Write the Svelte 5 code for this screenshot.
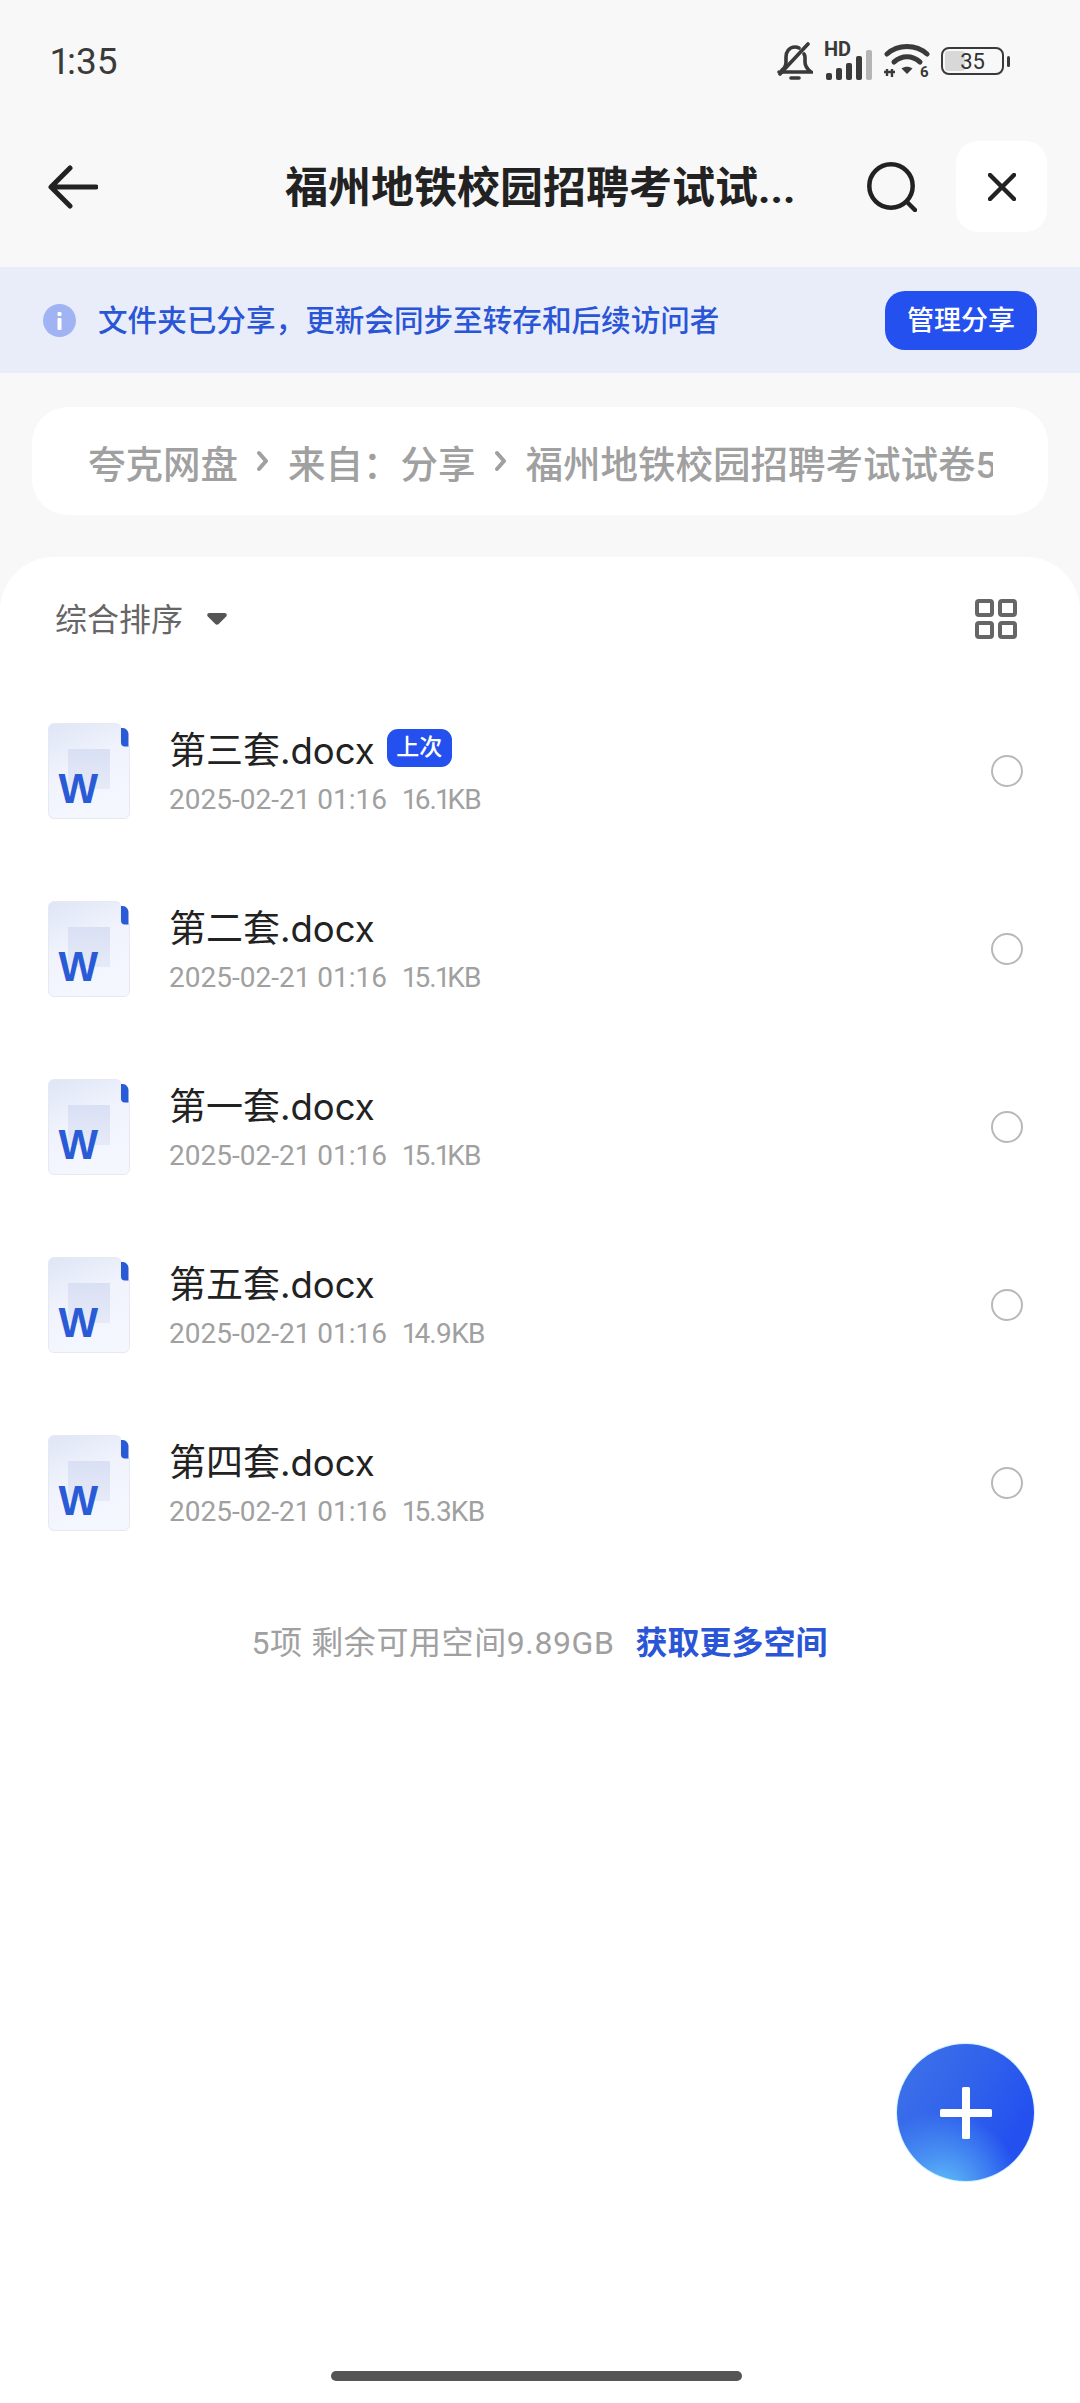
<script>
  const files = [
    { name: "第三套", size: "16.1KB", last: true },
    { name: "第二套", size: "15.1KB" },
    { name: "第一套", size: "15.1KB" },
    { name: "第五套", size: "14.9KB" },
    { name: "第四套", size: "15.3KB" },
  ];
</script>

<div class="page">
  <!-- status bar -->
  <div class="status">
    <span class="time">1:35</span>
    <div class="status-icons">
      <svg width="36" height="38" viewBox="0 0 36 38" fill="none" stroke="#3a3a3a" stroke-width="3.6" stroke-linecap="round">
        <path d="M2 30h32c-4-3-6-6-6-10v-5c0-1-.4-2-1-3M22 6c-1-.6-2.500-1-4-1-6 0-9 5-9 10v5c0 3-1 6-4 8" />
        <path d="M3 32 31 2" />
        <path d="M14 36h8" />
      </svg>
      <div class="signal">
        <span class="hd">HD</span>
        <div class="bars">
          <i class="b1"></i><i class="b2"></i><i class="b3"></i><i class="b4"></i><i class="b5"></i>
        </div>
      </div>
      <svg width="46" height="40" viewBox="0 0 46 40" fill="none">
        <path d="M3 13C14 3 32 3 43 13" stroke="#3a3a3a" stroke-width="5" stroke-linecap="round" />
        <path d="M10 21c8-7 18-7 26 0" stroke="#3a3a3a" stroke-width="5" stroke-linecap="round" />
        <path d="M17.500 27.500c3.500-2.500 7.500-2.500 11 0L23 33z" fill="#3a3a3a" />
        <path d="M3 35v-7M8 28v8M11 31H0" stroke="#3a3a3a" stroke-width="2.400" />
        <text x="36" y="36" class="six">6</text>
      </svg>
      <div class="battery">
        <div class="battery-body">
          <div class="battery-fill"></div>
          <span>35</span>
        </div>
        <i class="battery-nub"></i>
      </div>
    </div>
  </div>

  <!-- nav bar -->
  <div class="nav">
    <svg class="back" width="50" height="44" viewBox="0 0 50 44" fill="none" stroke="#222" stroke-width="5" stroke-linecap="round" stroke-linejoin="round">
      <path d="M22 3 3 22l19 19M4 22h44" />
    </svg>
    <div class="title">福州地铁校园招聘考试试...</div>
    <svg class="search" width="50" height="50" viewBox="0 0 50 50" fill="none" stroke="#222" stroke-width="4.500" stroke-linecap="round">
      <circle cx="24" cy="24" r="21.700" />
      <path d="M41 41l7 7" />
    </svg>
    <button class="close" aria-label="关闭">
      <svg width="28" height="28" viewBox="0 0 28 28" fill="none" stroke="#222" stroke-width="4.500" stroke-linecap="round">
        <path d="M2 2l24 24M26 2 2 26" />
      </svg>
    </button>
  </div>

  <!-- shared folder notice -->
  <div class="notice">
    <svg class="info" width="33" height="33" viewBox="0 0 33 33">
      <circle cx="16.500" cy="16.500" r="16.500" fill="#a0b4f3" />
      <rect x="14.500" y="14" width="4" height="12" rx="1" fill="#fff" />
      <rect x="14.500" y="8" width="4" height="4" rx="1" fill="#fff" />
    </svg>
    <span class="notice-text">文件夹已分享，更新会同步至转存和后续访问者</span>
    <button class="manage"><span>管理分享</span></button>
  </div>

  <!-- breadcrumb -->
  <div class="crumb">
    <div class="crumb-inner">
      <span>夸克网盘</span>
      <svg width="12" height="22" viewBox="0 0 12 22" fill="none" stroke="#a0a0a0" stroke-width="4" stroke-linecap="round" stroke-linejoin="round"><path d="M2 3l7 8-7 8" /></svg>
      <span>来自：分享</span>
      <svg width="12" height="22" viewBox="0 0 12 22" fill="none" stroke="#a0a0a0" stroke-width="4" stroke-linecap="round" stroke-linejoin="round"><path d="M2 3l7 8-7 8" /></svg>
      <span>福州地铁校园招聘考试试卷5套</span>
    </div>
  </div>

  <!-- file sheet -->
  <div class="sheet">
    <div class="sort">
      <span class="sort-label">综合排序</span>
      <svg class="caret" width="20" height="12" viewBox="0 0 20 12" fill="#555">
        <path d="M2.500 0h15c2 0 3 2 1.700 3.500l-7.500 7.500c-1 1-2.400 1-3.400 0L.8 3.500C-.5 2 .5 0 2.500 0z" />
      </svg>
      <svg class="grid" width="42" height="40" viewBox="0 0 42 40" fill="none" stroke="#666" stroke-width="4">
        <rect x="2" y="2" width="15" height="14" rx="2" />
        <rect x="25" y="2" width="15" height="14" rx="2" />
        <rect x="2" y="24" width="15" height="14" rx="2" />
        <rect x="25" y="24" width="15" height="14" rx="2" />
      </svg>
    </div>

    <div class="list">
      {#each files as file}
        <div class="row">
          <svg class="doc" width="82" height="96" viewBox="0 0 82 96">
            <defs>
              <linearGradient id="docbg" x1="0" y1="0" x2="0.400" y2="1">
                <stop offset="0" stop-color="#dfe5f6" />
                <stop offset="0.500" stop-color="#f0f3fc" />
                <stop offset="1" stop-color="#f4f7fe" />
              </linearGradient>
              <linearGradient id="docrect" x1="0" y1="0" x2="0" y2="1">
                <stop offset="0" stop-color="#d9e0f4" />
                <stop offset="1" stop-color="#e6eaf8" />
              </linearGradient>
            </defs>
            <path d="M6 .5h62a5 5 0 0 1 5 5V20a3 3 0 0 0 3 3h5.500v67a5.500 5.500 0 0 1-5.500 5.500H6A5.500 5.500 0 0 1 .5 90V6A5.500 5.500 0 0 1 6 .5z" fill="url(#docbg)" stroke="#e6e9f2" />
            <path d="M73 5h2a6 6 0 0 1 5.500 6v12.500h-3.500a4 4 0 0 1-4-4z" fill="#2a5bd7" />
            <rect x="20" y="26" width="42" height="40" fill="url(#docrect)" />
            <text x="10.500" y="80" class="w">W</text>
          </svg>
          <div class="info-col">
            <div class="name-line">
              <span class="name">{file.name}<span class="ext">.docx</span></span>
              {#if file.last}<span class="badge">上次</span>{/if}
            </div>
            <div class="meta">
              <span>2025-02-21 01:16</span>
              <span class="size">{file.size}</span>
            </div>
          </div>
          <i class="radio"></i>
        </div>
      {/each}
    </div>

    <div class="summary">
      <span class="left">5项 剩余可用空间9.89GB</span>
      <span class="more">获取更多空间</span>
    </div>
  </div>

  <button class="fab" aria-label="新建">
    <svg width="52" height="52" viewBox="0 0 52 52" fill="#fff">
      <rect x="22" y="0" width="8" height="52" rx="1.500" />
      <rect x="0" y="22" width="52" height="8" rx="1.500" />
    </svg>
  </button>
  <div class="home"></div>
</div>

<style>
  :global(body) {
    margin: 0;
    background: #f8f8f8;
  }

  .page {
    position: relative;
    width: 1080px;
    height: 2403px;
    overflow: hidden;
    display: flex;
    flex-direction: column;
    background: #f8f8f8;
    font-family: Roboto, "Noto Sans CJK SC", sans-serif;
    color: #222;
  }

  button {
    border: none;
    padding: 0;
    font-family: inherit;
  }

  /* status bar */
  .status {
    height: 122px;
    flex: none;
    display: flex;
    align-items: center;
    padding: 0 70px 0 51px;
    box-sizing: border-box;
  }
  .time {
    font-size: 37px;
    color: #3a3a3a;
    font-family: Roboto, sans-serif;
    font-variant-numeric: proportional-nums;
  }
  .status-icons {
    margin-left: auto;
    display: flex;
    align-items: center;
    gap: 11px;
  }
  .signal {
    position: relative;
    width: 49px;
    height: 38px;
  }
  .hd {
    position: absolute;
    left: 0;
    top: -3px;
    font-size: 20px;
    font-weight: 700;
    color: #3a3a3a;
    line-height: 20px;
  }
  .bars {
    position: absolute;
    left: 2px;
    right: 0;
    bottom: 0;
    height: 30px;
    display: flex;
    align-items: flex-end;
    gap: 4px;
  }
  .bars i {
    width: 6px;
    border-radius: 2px;
    background: #3a3a3a;
  }
  .b1 { height: 7px; }
  .b2 { height: 12px; }
  .b3 { height: 17px; }
  .b4 { height: 24px; }
  .b5 { height: 30px; background: #b5b5b5 !important; }
  .six {
    font-size: 15px;
    font-weight: 700;
    fill: #3a3a3a;
    font-family: Roboto, sans-serif;
  }
  .battery {
    display: flex;
    align-items: center;
    gap: 3px;
  }
  .battery-body {
    position: relative;
    width: 63px;
    height: 28px;
    box-sizing: border-box;
    border: 2.500px solid #3a3a3a;
    border-radius: 8px;
    display: flex;
    align-items: center;
    justify-content: center;
    font-size: 22px;
    color: #333;
  }
  .battery-fill {
    position: absolute;
    left: 2px;
    top: 2px;
    bottom: 2px;
    width: 20px;
    border-radius: 3px;
    background: #d8d8d8;
  }
  .battery-body span {
    position: relative;
    font-family: Roboto, sans-serif;
  }
  .battery-nub {
    width: 3px;
    height: 11px;
    border-radius: 2px;
    background: #3a3a3a;
  }

  /* nav */
  .nav {
    position: relative;
    height: 145px;
    flex: none;
    display: flex;
    align-items: center;
    padding: 0 33px 16px 48px;
    box-sizing: border-box;
  }
  .title {
    position: absolute;
    left: 285px;
    top: 36px;
    font-size: 43px;
    line-height: 60px;
    font-weight: 700;
    color: #222;
    white-space: nowrap;
  }
  .search {
    margin-left: auto;
    margin-right: 39px;
  }
  .close {
    width: 91px;
    height: 91px;
    border-radius: 22px;
    background: #fff;
    display: flex;
    align-items: center;
    justify-content: center;
  }

  /* notice */
  .notice {
    height: 106px;
    flex: none;
    display: flex;
    align-items: center;
    padding: 0 43px;
    box-sizing: border-box;
    background: #e9edf9;
  }
  .info {
    flex: none;
  }
  .notice-text {
    margin: 0 0 3px 22px;
    font-size: 29.600px;
    font-weight: 500;
    color: #2a55d6;
    white-space: nowrap;
  }
  .manage {
    margin-left: auto;
    width: 152px;
    height: 59px;
    padding-bottom: 4px;
    border-radius: 20px;
    background: #2350ef;
    color: #fff;
    font-size: 27px;
    font-weight: 500;
  }

  /* breadcrumb */
  .crumb {
    height: 108px;
    flex: none;
    margin: 34px 32px 0;
    padding: 0 55px 0 56px;
    border-radius: 36px;
    background: #fff;
    display: flex;
    align-items: center;
    box-sizing: border-box;
  }
  .crumb-inner {
    width: 100%;
    display: flex;
    align-items: center;
    gap: 19px;
    overflow: hidden;
    white-space: nowrap;
    font-size: 37.500px;
    font-weight: 500;
    color: #a0a0a0;
  }
  .crumb-inner svg {
    flex: none;
  }

  /* sheet */
  .sheet {
    flex: 1;
    margin-top: 42px;
    border-radius: 54px 54px 0 0;
    background: #fff;
  }
  .sort {
    height: 120px;
    display: flex;
    align-items: center;
    padding: 0 63px 0 55px;
    box-sizing: border-box;
  }
  .sort-label {
    font-size: 32px;
    color: #666;
  }
  .caret {
    margin: 4px 0 0 24px;
  }
  .grid {
    margin: 4px 0 0 auto;
  }
  .list {
    margin-top: 5px;
  }
  .row {
    height: 178px;
    display: flex;
    align-items: center;
    padding: 0 57px 0 48px;
    box-sizing: border-box;
  }
  .doc {
    flex: none;
  }
  .w {
    font-family: "Liberation Sans", sans-serif;
    font-size: 42px;
    font-weight: 700;
    fill: #2a5bd7;
  }
  .info-col {
    margin-left: 39px;
    display: flex;
    flex-direction: column;
    gap: 8px;
  }
  .name-line {
    display: flex;
    align-items: center;
    gap: 12px;
    height: 50px;
  }
  .name {
    font-size: 37px;
    color: #222;
  }
  .ext {
    font-family: Inter, sans-serif;
    font-size: 36.500px;
  }
  .badge {
    width: 65px;
    height: 38px;
    border-radius: 11px;
    background: #2350ef;
    color: #fff;
    font-size: 23px;
    font-weight: 500;
    text-align: center;
    line-height: 37px;
  }
  .meta {
    display: flex;
    gap: 16px;
    font-size: 28px;
    line-height: 38px;
    color: #a0a0a0;
  }
  .size {
    letter-spacing: -0.800px;
    font-variant-numeric: proportional-nums;
  }
  .radio {
    margin-left: auto;
    width: 32px;
    height: 32px;
    box-sizing: border-box;
    border: 2.500px solid #b8b8b8;
    border-radius: 50%;
  }
  .summary {
    margin-top: 49px;
    display: flex;
    justify-content: center;
    gap: 21px;
    padding-right: 1px;
    font-size: 32px;
    line-height: 44px;
    color: #a0a0a0;
  }
  .left {
    letter-spacing: 0.600px;
  }
  .more {
    font-weight: 700;
    color: #2a55d6;
  }

  .fab {
    position: absolute;
    left: 897px;
    top: 2044px;
    width: 137px;
    height: 137px;
    border-radius: 50%;
    background:
      radial-gradient(circle at 32% 108%, #62c4fa 0, #4a94f3 20%, rgba(70, 130, 240, 0) 46%),
      linear-gradient(120deg, #3f74e8 0%, #2f60ec 50%, #2350ef 80%);
    box-shadow: 0 0 0 1px rgba(170, 235, 255, 0.6);
    display: flex;
    align-items: center;
    justify-content: center;
  }
  .home {
    position: absolute;
    left: 331px;
    top: 2371px;
    width: 411px;
    height: 10px;
    border-radius: 5px;
    background: #555;
  }
</style>
